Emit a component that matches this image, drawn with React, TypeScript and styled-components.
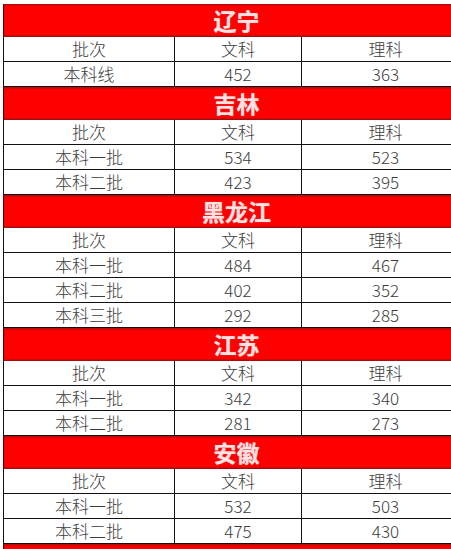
import styled, { createGlobalStyle } from 'styled-components';

const GlobalStyle = createGlobalStyle`
    html, body {
        margin: 0;
        padding: 0;
        background: #ffffff;
        overflow: hidden;
    }
    body {
        font-family: "Noto Sans CJK SC", "Noto Sans", sans-serif;
    }
`

type Row = [string, string, string];

const provinces: { name: string; rows: Row[] }[] = [
    { name: '辽宁', rows: [['本科线', '452', '363']] },
    { name: '吉林', rows: [['本科一批', '534', '523'], ['本科二批', '423', '395']] },
    { name: '黑龙江', rows: [['本科一批', '484', '467'], ['本科二批', '402', '352'], ['本科三批', '292', '285']] },
    { name: '江苏', rows: [['本科一批', '342', '340'], ['本科二批', '281', '273']] },
    { name: '安徽', rows: [['本科一批', '532', '503'], ['本科二批', '475', '430']] },
];

function App() {
    return (
        <Page>
            <GlobalStyle />
            <Table>
                {provinces.map((p) => (
                    <section key={p.name}>
                        <Header>{p.name}</Header>
                        <Line>
                            <Cell>批次</Cell>
                            <Cell>文科</Cell>
                            <Cell>理科</Cell>
                        </Line>
                        {p.rows.map((r) => (
                            <Line key={r[0]}>
                                {r.map((v, i) => (
                                    <Cell key={i}>{v}</Cell>
                                ))}
                            </Line>
                        ))}
                    </section>
                ))}
                <Header />
            </Table>
        </Page>
    )
}

const Page = styled.div`
    width: 451px;
    height: 549px;
    overflow: hidden;
    padding-top: 4px;
    box-sizing: border-box;
`

const Table = styled.div`
    width: 466px;
    margin-left: 3px;
    display: flex;
    flex-direction: column;
`

const Header = styled.div`
    height: 33px;
    box-sizing: border-box;
    background-color: #fe0000;
    border-top: 1px solid #b80c0c;
    border-bottom: 1px solid #a01010;
    border-left: 1px solid #500;
    box-shadow: inset 0 1px 1px #d40808, inset 0 -1px 1px #d40808;
    color: #ffe2e2;
    font-size: 23px;
    font-weight: 700;
    line-height: 31px;
    text-align: center;
    text-shadow: 0 0 1px #ff9a9a;
`

const Line = styled.div`
    display: grid;
    grid-template-columns: 171px 127px 168px;
    height: 25px;
    box-sizing: border-box;
    border-bottom: 1px solid #111;
`

const Cell = styled.div`
    border-left: 1px solid #111;
    color: #3c3c3c;
    font-size: 17px;
    font-weight: 300;
    line-height: 24px;
    text-align: center;
    white-space: nowrap;
`

export default App;
